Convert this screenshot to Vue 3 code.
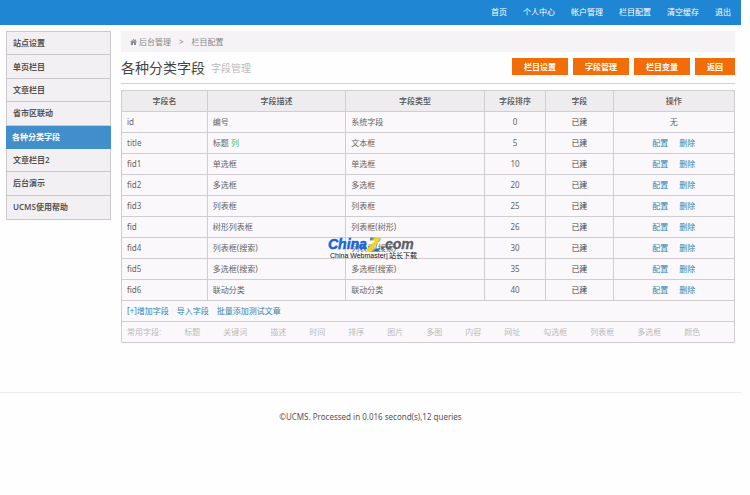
<script setup>
const nav = ['首页', '个人中心', '帐户管理', '栏目配置', '清空缓存', '退出']
const menu = ['站点设置', '单页栏目', '文章栏目', '省市区联动', '各种分类字段', '文章栏目2', '后台演示', 'UCMS使用帮助']
const current = '各种分类字段'
const actions = ['栏目设置', '字段管理', '栏目变量', '返回']
const fields = [
  { name: 'id', label: '编号', type: '系统字段', order: 0, fixed: true },
  { name: 'title', label: '标题', type: '文本框', order: 5, listed: true },
  { name: 'fid1', label: '单选框', type: '单选框', order: 10 },
  { name: 'fid2', label: '多选框', type: '多选框', order: 20 },
  { name: 'fid3', label: '列表框', type: '列表框', order: 25 },
  { name: 'fid', label: '树形列表框', type: '列表框(树形)', order: 26 },
  { name: 'fid4', label: '列表框(搜索)', type: '列表框(搜索)', order: 30 },
  { name: 'fid5', label: '多选框(搜索)', type: '多选框(搜索)', order: 35 },
  { name: 'fid6', label: '联动分类', type: '联动分类', order: 40 },
]
const tools = ['[+]增加字段', '导入字段', '批量添加测试文章']
const presets = ['标题', '关键词', '描述', '时间', '排序', '图片', '多图', '内容', '网址', '勾选框', '列表框', '多选框', '颜色']
</script>

<template>
  <div class="page">
    <header class="topbar">
      <nav class="topnav">
        <a v-for="item in nav" :key="item" href="#">{{ item }}</a>
      </nav>
    </header>

    <div class="layout">
      <nav class="sidebar">
        <a v-for="item in menu" :key="item" href="#" :class="{ active: item === current }">{{ item }}</a>
      </nav>

      <main class="content">
        <div class="crumbs">
          <svg class="home" viewBox="0 0 14 12" aria-hidden="true">
            <path d="M7 0 0 6l1 1 6-5 6 5 1-1-2-2V1h-2v1.500z" />
            <path d="M7 3 2 7v5h4V8h2v4h4V7z" />
          </svg>
          <a href="#">后台管理</a>
          <span class="sep">&gt;</span>
          <a href="#">栏目配置</a>
        </div>

        <div class="heading">
          <h1>各种分类字段</h1>
          <small>字段管理</small>
          <div class="actions">
            <button v-for="item in actions" :key="item" type="button">{{ item }}</button>
          </div>
        </div>

        <div class="table-wrap">
          <table>
            <colgroup>
              <col class="c-name" /><col class="c-text" /><col class="c-text" />
              <col class="c-order" /><col class="c-state" /><col class="c-ops" />
            </colgroup>
            <thead>
              <tr>
                <th>字段名</th><th>字段描述</th><th>字段类型</th><th>字段排序</th><th>字段</th><th>操作</th>
              </tr>
            </thead>
            <tbody>
              <tr v-for="f in fields" :key="f.name">
                <td>{{ f.name }}</td>
                <td>{{ f.label }} <span v-if="f.listed" class="listed">列</span></td>
                <td>{{ f.type }}</td>
                <td class="mid">{{ f.order }}</td>
                <td class="mid dark">已建</td>
                <td class="mid">
                  <template v-if="f.fixed">无</template>
                  <div v-else class="ops"><a href="#">配置</a><a href="#">删除</a></div>
                </td>
              </tr>
            </tbody>
            <tfoot>
              <tr>
                <td colspan="6">
                  <div class="tools"><a v-for="t in tools" :key="t" href="#">{{ t }}</a></div>
                </td>
              </tr>
              <tr>
                <td colspan="6">
                  <div class="presets"><span>常用字段:</span><a v-for="p in presets" :key="p" href="#">{{ p }}</a></div>
                </td>
              </tr>
            </tfoot>
          </table>

          <svg class="mark" viewBox="0 0 92 30" role="img" aria-label="ChinaZ.com">
            <defs>
              <linearGradient id="zfill" x1="0" y1="0" x2="1" y2="1">
                <stop offset="0.250" stop-color="#2b7fb0" />
                <stop offset="0.400" stop-color="#f3d51f" />
                <stop offset="0.550" stop-color="#f3d51f" />
                <stop offset="0.700" stop-color="#1d75b0" />
              </linearGradient>
            </defs>
            <text class="brand blue" x="0" y="17">China</text>
            <text class="zed" x="40" y="19">Z</text>
            <text class="brand gray" x="53" y="17">.com</text>
            <text class="tag" x="2" y="26">China Webmaster</text>
            <text class="tag" x="58" y="26">|</text>
            <text class="tag cjk" x="61" y="26">站长下载</text>
          </svg>
        </div>
      </main>
    </div>

    <footer>©UCMS. Processed in 0.016 second(s),12 queries</footer>
  </div>
</template>

<style>
body {
  background: #fefefe;
}
</style>

<style scoped>
.page {
  margin-right: 9px;
  font: 8px/12px "Noto Sans", "Noto Sans CJK SC", sans-serif;
  color: #666;
}
a {
  color: inherit;
  text-decoration: none;
}
.topbar {
  height: 25px;
  background: #1e86d2;
  color: #fff;
}
.topnav {
  display: flex;
  justify-content: flex-end;
  gap: 16px;
  padding: 6px 10px 0 0;
}
.layout {
  display: flex;
  align-items: flex-start;
  gap: 10px;
  padding: 6px 6px 0;
}
.sidebar {
  box-sizing: border-box;
  flex: 0 0 105px;
  display: grid;
  grid-auto-rows: 1fr;
  min-height: 189px;
  border: 1px solid #ccc9cd;
  background: #f2f0f3;
  color: #555;
  font-weight: 600;
}
.sidebar a {
  display: flex;
  align-items: center;
  padding: 0 6px;
  border-bottom: 1px solid #ccc9cd;
}
.sidebar a:last-child {
  border-bottom: 0;
}
.sidebar a.active {
  margin: 0 -1px;
  border-color: #428ecb;
  background: #428ecb;
  color: #fff;
}
.content {
  flex: 1;
  min-width: 0;
}
.crumbs {
  display: flex;
  align-items: center;
  height: 21px;
  padding-left: 9px;
  background: #f5f3f6;
  color: #888;
}
.home {
  width: 7px;
  height: 6px;
  margin-right: 2px;
  fill: #888;
}
.sep {
  margin: 0 8px;
}
.heading {
  display: flex;
  align-items: center;
  height: 31px;
  border-bottom: 1px solid #d2d0d3;
}
h1 {
  margin: 0 6px 0 0;
  font-size: 14px;
  line-height: 20px;
  font-weight: 400;
  color: #444;
}
small {
  font-size: 10px;
  line-height: 16px;
  color: #bbb;
}
.actions {
  display: flex;
  gap: 5px;
  margin-left: auto;
  padding-bottom: 2px;
}
button {
  height: 17px;
  padding: 0 12px;
  border: 0;
  background: #f36c0a;
  color: #fff;
  font: inherit;
  font-weight: 600;
}
.table-wrap {
  position: relative;
  margin-top: 6px;
}
table {
  width: 100%;
  table-layout: fixed;
  border-collapse: collapse;
  background: #faf8fb;
}
.c-name { width: 14%; }
.c-text { width: 22.6%; }
.c-order { width: 10%; }
.c-state { width: 11%; }
th,
td {
  height: 20px;
  padding: 0 5px;
  border: 1px solid #cfcdd0;
  text-align: left;
}
th {
  background: #eeecef;
  color: #555;
  font-weight: 500;
  text-align: center;
}
.mid {
  text-align: center;
}
.dark {
  color: #444;
}
.listed {
  color: #3fbf3f;
}
.ops {
  display: flex;
  justify-content: center;
  gap: 11px;
}
.ops,
.tools {
  color: #3585ad;
}
.tools {
  display: flex;
  gap: 8px;
}
.presets {
  display: flex;
  gap: 23px;
  white-space: nowrap;
  color: #bbb;
}
.mark {
  position: absolute;
  left: 207px;
  top: 142px;
  width: 92px;
  height: 30px;
}
.brand {
  font: italic bold 14px "Liberation Sans", sans-serif;
}
.blue {
  fill: #1465dc;
  stroke: #1465dc;
  stroke-width: 0.500;
}
.gray {
  fill: #57606b;
  stroke: #57606b;
  stroke-width: 0.300;
}
.zed {
  font: italic bold 19px "Liberation Sans", sans-serif;
  fill: url(#zfill);
  stroke: url(#zfill);
  stroke-width: 1;
}
.tag {
  font: 7px "Liberation Sans", sans-serif;
  fill: #111;
}
.cjk {
  font-family: "Noto Sans CJK SC", sans-serif;
}
footer {
  margin-top: 49px;
  padding-top: 18px;
  border-top: 1px solid #ececec;
  text-align: center;
  color: #555;
}
</style>
